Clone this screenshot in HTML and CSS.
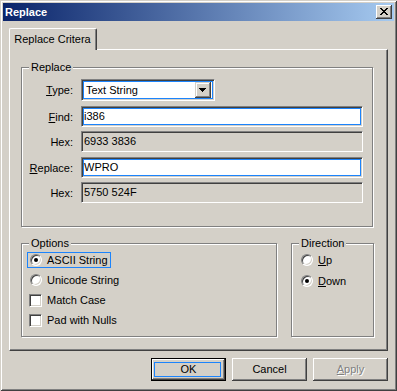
FILE: index.html
```html
<!DOCTYPE html>
<html lang="en">
<head>
  <meta charset="utf-8"/>
  <title>Replace</title>
  <link rel="stylesheet" href="styles.css">
</head>
<body>
  <div class="window">

    <div class="titlebar">
      <span class="title">Replace</span>
      <button class="btn-close" aria-label="Close">
        <svg width="8" height="7" viewBox="0 0 8 7" shape-rendering="crispEdges">
          <path fill="#000" d="M0 0h2v1H0z M6 0h2v1H6z M1 1h2v1H1z M5 1h2v1H5z M2 2h4v1H2z M3 3h2v1H3z M2 4h4v1H2z M1 5h2v1H1z M5 5h2v1H5z M0 6h2v1H0z M6 6h2v1H6z"/>
        </svg>
      </button>
    </div>

    <div class="client">
      <div class="tabs">
        <div class="tab">Replace Critera</div>
      </div>

      <div class="panel">
        <div class="group group-replace">
          <span class="group-title">Replace</span>

          <div class="field-row row-combo">
            <span class="field-label"><u>T</u>ype:</span>
            <div class="combo">
              <span class="combo-text">Text String</span>
              <span class="combo-btn">
                <svg width="7" height="4" viewBox="0 0 7 4" shape-rendering="crispEdges">
                  <path fill="#000" d="M0 0h7v1H0z M1 1h5v1H1z M2 2h3v1H2z M3 3h1v1H3z"/>
                </svg>
              </span>
            </div>
          </div>

          <div class="field-row">
            <span class="field-label"><u>F</u>ind:</span>
            <div class="textbox">i386</div>
          </div>

          <div class="field-row row-hex">
            <span class="field-label">Hex:</span>
            <div class="hexbox">6933 3836</div>
          </div>

          <div class="field-row">
            <span class="field-label"><u>R</u>eplace:</span>
            <div class="textbox">WPRO</div>
          </div>

          <div class="field-row row-hex">
            <span class="field-label">Hex:</span>
            <div class="hexbox">5750 524F</div>
          </div>
        </div>

        <div class="group-row">
          <div class="group group-options">
            <span class="group-title">Options</span>
            <div class="option focused"><span class="radio checked"></span>ASCII String</div>
            <div class="option"><span class="radio"></span>Unicode String</div>
            <div class="option"><span class="checkbox"></span>Match Case</div>
            <div class="option"><span class="checkbox"></span>Pad with Nulls</div>
          </div>

          <div class="group group-direction">
            <span class="group-title">Direction</span>
            <div class="option"><span class="radio"></span><span><u>U</u>p</span></div>
            <div class="option"><span class="radio checked"></span><span><u>D</u>own</span></div>
          </div>
        </div>
      </div>

      <div class="buttons">
        <button class="btn btn-default">OK</button>
        <button class="btn">Cancel</button>
        <button class="btn btn-disabled"><u>A</u>pply</button>
      </div>
    </div>

  </div>
</body>
</html>
```

FILE: styles.css
```css
body {
  margin: 0;
  font-family: "Liberation Sans", Arial, sans-serif;
  font-size: 11px;
  color: #000;
  background-color: #d4d0c8;
}

.window {
  width: 397px;
  height: 391px;
  box-sizing: border-box;
  padding: 3px;
  display: flex;
  flex-direction: column;
  background-color: #d4d0c8;
  box-shadow: inset 1px 1px #d4d0c8, inset -1px -1px #404040,
              inset 2px 2px #fff, inset -2px -2px #808080;
}

.titlebar {
  height: 18px;
  display: flex;
  align-items: center;
  padding: 0 2px 0 2px;
  background: linear-gradient(to right, #0a246a, #a6caf0);
  color: #fff;
  font-weight: bold;
}

.title {
  flex: 1;
}

.btn-close {
  width: 16px;
  height: 14px;
  padding: 0 0 1px 0;
  border: none;
  background-color: #d4d0c8;
  display: flex;
  align-items: center;
  justify-content: center;
  box-shadow: inset -1px -1px #404040, inset 1px 1px #fff,
              inset -2px -2px #808080, inset 2px 2px #d4d0c8;
}

.client {
  flex: 1;
  display: flex;
  flex-direction: column;
  padding: 7px 6px 7px 6px;
}

.tabs {
  display: flex;
}

.tab {
  width: 88px;
  height: 22px;
  box-sizing: border-box;
  margin-bottom: -1px;
  position: relative;
  z-index: 1;
  display: flex;
  align-items: center;
  justify-content: center;
  padding: 0 1px 2px 0;
  background-color: #d4d0c8;
  border-top: 1px solid #fff;
  border-left: 1px solid #fff;
  border-right: 1px solid #404040;
  border-radius: 2px 2px 0 0;
  box-shadow: inset -1px 0 #808080;
}

.panel {
  height: 302px;
  box-sizing: border-box;
  padding: 17px 0 0 11px;
  display: flex;
  flex-direction: column;
  border-top: 1px solid #fff;
  border-left: 1px solid #fff;
  border-right: 1px solid #404040;
  border-bottom: 1px solid #404040;
  box-shadow: inset -1px -1px #808080;
}

/* etched group boxes */
.group {
  position: relative;
  box-sizing: border-box;
  border: 1px solid #808080;
  box-shadow: inset 1px 1px #fff, 1px 1px #fff;
}

.group-title {
  position: absolute;
  top: -7px;
  left: 7px;
  padding: 0 2px;
  line-height: 13px;
  background-color: #d4d0c8;
}

.group-replace {
  width: 352px;
  height: 160px;
  padding-top: 5px;
}

.field-row {
  display: flex;
  align-items: center;
  margin-top: 5px;
}

.row-combo {
  margin-top: 6px;
}

.row-hex {
  margin-top: 4px;
}

.field-label {
  width: 51px;
  margin-right: 8px;
  text-align: right;
}

.combo {
  width: 134px;
  height: 22px;
  box-sizing: border-box;
  display: flex;
  align-items: center;
  padding: 2px;
  background-color: #fff;
  border: 1px solid;
  border-color: #808080 #fff #fff #808080;
  box-shadow: inset 1px 1px #404040, inset -1px -1px #d4d0c8,
              inset 0 0 0 2px #1c84fc;
}

.combo-text {
  flex: 1;
  padding-left: 2px;
}

.combo-btn {
  width: 16px;
  height: 16px;
  box-sizing: border-box;
  display: flex;
  align-items: center;
  justify-content: center;
  padding: 0 1px 1px 0;
  margin-right: 1px;
  background-color: #d4d0c8;
  box-shadow: inset -1px -1px #404040, inset 1px 1px #d4d0c8,
              inset -2px -2px #808080, inset 2px 2px #fff;
}

.textbox,
.hexbox {
  width: 282px;
  height: 21px;
  box-sizing: border-box;
  display: flex;
  align-items: center;
  padding: 0 0 1px 2px;
  border: 1px solid;
  border-color: #808080 #fff #fff #808080;
}

.textbox {
  background-color: #fff;
  box-shadow: inset 1px 1px #404040, inset -1px -1px #d4d0c8,
              inset 0 0 0 2px #1c84fc;
}

.hexbox {
  background-color: #d4d0c8;
  box-shadow: inset 1px 1px #404040, inset -1px -1px #d4d0c8;
}

.group-row {
  display: flex;
  gap: 14px;
  margin-top: 16px;
}

.group-options {
  width: 256px;
  height: 94px;
  padding: 8px 0 0 5px;
  display: flex;
  flex-direction: column;
  align-items: flex-start;
  gap: 4px;
}

.group-direction {
  width: 83px;
  height: 94px;
  padding: 8px 0 0 6px;
  display: flex;
  flex-direction: column;
  align-items: flex-start;
  gap: 5px;
}

.option {
  height: 16px;
  box-sizing: border-box;
  display: flex;
  align-items: center;
  gap: 5px;
  padding: 0 2px 0 1px;
  border: 1px solid transparent;
}

.option.focused {
  border-color: #1c84fc;
}

.radio {
  width: 12px;
  height: 12px;
  box-sizing: border-box;
  margin-left: 1px;
  position: relative;
  border-radius: 50%;
  border: 1px solid;
  border-color: #808080 #fff #fff #808080;
  background-color: #fff;
  box-shadow: inset 1px 1px #404040, inset -1px -1px #d4d0c8;
}

.radio.checked::after {
  content: "";
  position: absolute;
  top: 3px;
  left: 3px;
  width: 4px;
  height: 4px;
  border-radius: 50%;
  background-color: #000;
}

.checkbox {
  width: 13px;
  height: 13px;
  box-sizing: border-box;
  border: 1px solid;
  border-color: #808080 #fff #fff #808080;
  background-color: #fff;
  box-shadow: inset 1px 1px #404040, inset -1px -1px #d4d0c8;
}

.buttons {
  display: flex;
  justify-content: flex-end;
  gap: 6px;
  margin-top: 7px;
}

.btn {
  width: 75px;
  height: 23px;
  box-sizing: border-box;
  padding: 0 0 1px 0;
  position: relative;
  border: none;
  font-family: inherit;
  font-size: 11px;
  color: #000;
  background-color: #d4d0c8;
  box-shadow: inset -1px -1px #404040, inset 1px 1px #fff,
              inset -2px -2px #808080, inset 2px 2px #d4d0c8;
}

.btn-default {
  border: 1px solid #000;
  box-shadow: inset -1px -1px #404040, inset 1px 1px #fff,
              inset -2px -2px #808080;
}

.btn-default::after {
  content: "";
  position: absolute;
  top: 3px;
  left: 2px;
  right: 4px;
  bottom: 3px;
  border: 1px solid #1c84fc;
}

.btn-disabled {
  color: #808080;
  text-shadow: 1px 1px 0 #fff;
}
```
